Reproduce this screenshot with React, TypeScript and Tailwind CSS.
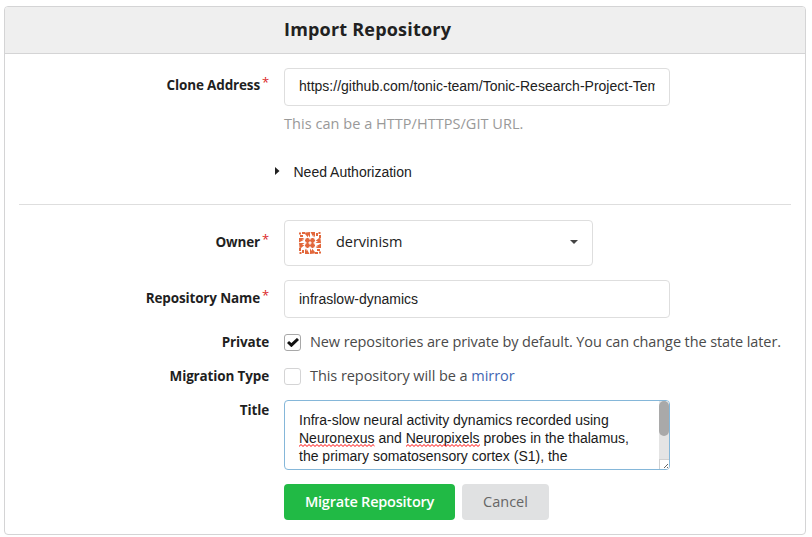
import type { ReactNode } from "react";

const SANS = "font-['Open_Sans','Noto_Sans',sans-serif]";
const ARIAL = "font-['Liberation_Sans',Arial,sans-serif]";

function Label({ children, required, className }: { children: ReactNode; required?: boolean; className: string }) {
  return (
    <div className={`flex w-[264px] shrink-0 justify-end whitespace-nowrap text-[13.5px] leading-5 font-bold tracking-[-0.15px] text-[#1f1f1f] ${SANS} ${className}`}>
      <span>{children}</span>
      {required && <span className="-mt-[3px] ml-[2px] w-[7px] text-[13px] font-normal text-[#db2828]">*</span>}
    </div>
  );
}

function Misspelled({ children, id }: { children: ReactNode; id: string }) {
  return (
    <span className="relative inline-block">
      {children}
      <svg className="absolute bottom-0 left-0 h-[3px] w-full" aria-hidden="true">
        <defs>
          <pattern id={id} width="4" height="3" patternUnits="userSpaceOnUse">
            <path d="M-1 1.5L0 2.5L2 0.5L4 2.5L5 1.5" fill="none" stroke="#ff0000" strokeWidth="1" />
          </pattern>
        </defs>
        <rect width="100%" height="3" fill={`url(#${id})`} />
      </svg>
    </span>
  );
}

function Rim() {
  return (
    <>
      <path d="M1 1.5h2v2H1zM4 1h3.2v2H4zM2 4h3v2H2z" />
      <path d="M7.5 1.5L12 1v5.5L10 4v2.5L7 3zM12.5 1H17v5.5L15.5 4v2.5z" />
    </>
  );
}

function Identicon() {
  return (
    <svg width="24" height="24" viewBox="0 0 24 24" className="shrink-0" fill="#e2683c">
      <Rim />
      <g transform="rotate(90 12 12)"><Rim /></g>
      <g transform="rotate(180 12 12)"><Rim /></g>
      <g transform="rotate(270 12 12)"><Rim /></g>
      <circle cx="9.5" cy="9.5" r="2.4" />
      <circle cx="14.5" cy="9.5" r="2.4" />
      <circle cx="9.5" cy="14.5" r="2.4" />
      <circle cx="14.5" cy="14.5" r="2.4" />
      <path d="M7 9h10v1H7zM7 14h10v1H7zM9 7h1v10H9zM14 7h1v10h-1z" />
    </svg>
  );
}

export default function App() {
  return (
    <div className="h-[537px] w-[812px] overflow-hidden bg-white pt-[6px] pl-1">
      <div className="h-[529px] w-[802px] rounded-[4px] border border-[#d4d4d5]">
        <div className="flex h-[47px] items-center rounded-t-[3px] border-b border-[#d4d4d5] bg-[#efefef] pb-[2px] pl-[279px]">
          <h1 className={`text-[18px] leading-6 font-bold tracking-[0.2px] whitespace-nowrap text-[#212121] ${SANS}`}>Import Repository</h1>
        </div>

        <div className="flex pt-[14px]">
          <Label required className="pt-[7px]">Clone Address</Label>
          <div className={`ml-[15px] flex h-[38px] w-[386px] items-center rounded-[4px] border border-[#dedede] px-[14px] pb-[2px] text-[14px] text-[#212121] ${ARIAL}`}>
            <span className="overflow-hidden whitespace-nowrap">https://github.com/tonic-team/Tonic-Research-Project-Template</span>
          </div>
        </div>
        <div className={`mt-2 ml-[279px] text-[14.5px] leading-5 tracking-[0.04px] whitespace-nowrap text-[#999] ${SANS}`}>This can be a HTTP/HTTPS/GIT URL.</div>

        <div className={`mt-[28px] ml-[270px] flex h-5 items-center text-[14px] text-[#212121] ${ARIAL}`}>
          <svg width="5" height="8" viewBox="0 0 5 8" fill="#212121" className="-mt-[2px]"><path d="M0 0l4.5 4L0 8z" /></svg>
          <span className="ml-[13.5px]">Need Authorization</span>
        </div>

        <div className="mx-[14px] mt-[22px] h-px bg-[#dedede]" />

        <div className="mt-[15px] flex">
          <Label required className="pt-[12px]">Owner</Label>
          <div className="ml-[15px] flex h-[46px] w-[309px] items-center rounded-[4px] border border-[#dedede] pr-[14px] pb-[2px] pl-[13px]">
            <div className="pt-[2px]"><Identicon /></div>
            <span className={`ml-[14px] text-[14.5px] tracking-[-0.05px] text-[#212121] ${SANS}`}>dervinism</span>
            <svg className="ml-auto" width="8" height="4" viewBox="0 0 8 4" fill="#444"><path d="M0 0h8L4 4z" /></svg>
          </div>
        </div>

        <div className="mt-[14px] flex">
          <Label required className="pt-[8px]">Repository Name</Label>
          <div className={`ml-[15px] flex h-[38px] w-[386px] items-center rounded-[4px] border border-[#dedede] px-[14px] text-[14px] text-[#212121] ${ARIAL}`}>
            infraslow-dynamics
          </div>
        </div>

        <div className="mt-[14px] flex h-5 items-center">
          <Label className="">Private</Label>
          <div className="ml-[15px] flex h-[17px] w-[17px] items-center justify-center rounded-[3px] border border-[#a8a8a8]">
            <svg width="12" height="9" viewBox="0 0 12 9" fill="none" stroke="#111" strokeWidth="3"><path d="M1 4l3.4 3.2L11 1" /></svg>
          </div>
          <span className={`ml-[9px] text-[14.5px] tracking-[-0.1px] whitespace-nowrap text-[#4a4a4a] ${SANS}`}>New repositories are private by default. You can change the state later.</span>
        </div>

        <div className="mt-[14px] flex h-5 items-center">
          <Label className="">Migration Type</Label>
          <div className="ml-[15px] h-[17px] w-[17px] rounded-[3px] border border-[#d4d4d5]" />
          <span className={`ml-[9px] text-[14.5px] tracking-[-0.06px] whitespace-nowrap text-[#4a4a4a] ${SANS}`}>This repository will be a <span className="text-[#4267b2]">mirror</span></span>
        </div>

        <div className="mt-[14px] flex">
          <Label className="">Title</Label>
          <div className="ml-[15px] flex h-[70px] w-[386px] overflow-hidden rounded-[4px] border border-[#85b7d9]">
            <div className={`h-[66px] w-[374px] shrink-0 pt-[10px] pl-[14px] text-[14px] leading-[18px] whitespace-nowrap text-[#1a1a1a] ${ARIAL}`}>
              <p>Infra-slow neural activity dynamics recorded using</p>
              <p className="h-[18px]"><Misspelled id="squiggle-a">Neuronexus</Misspelled> and <Misspelled id="squiggle-b">Neuropixels</Misspelled> probes in the thalamus,</p>
              <p>the primary somatosensory cortex (S1), the</p>
            </div>
            <div className="w-[10px] bg-[#e4e4e4]">
              <div className="h-[35px] rounded-[5px] bg-[#a9a9a9]" />
              <div className="mt-[23px] h-[10px] border-t border-l border-[#d0d0d0] bg-white">
                <svg width="9" height="9" viewBox="0 0 9 9" stroke="#555" strokeWidth="0.9"><path d="M4 8L8 4M7 8L8 7" /></svg>
              </div>
            </div>
          </div>
        </div>

        <div className={`mt-[14px] ml-[279px] flex gap-[7px] text-[14.5px] ${SANS}`}>
          <button className="h-9 w-[171px] rounded-[4px] bg-[#21ba45] font-semibold tracking-[-0.22px] whitespace-nowrap text-white">Migrate Repository</button>
          <button className="h-9 w-[87px] rounded-[4px] bg-[#e0e1e2] text-[#666]">Cancel</button>
        </div>
      </div>
    </div>
  );
}
